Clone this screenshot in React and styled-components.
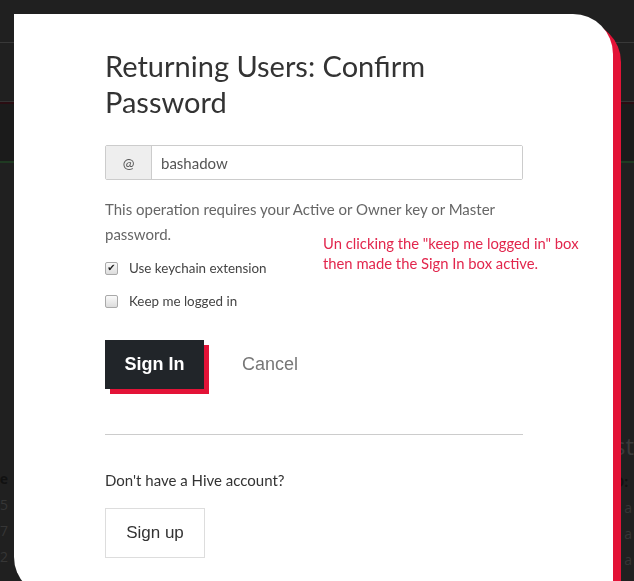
import styled, { createGlobalStyle } from "styled-components";

const GlobalStyle = createGlobalStyle`
  html, body {
    margin: 0;
    padding: 0;
    height: 100%;
    overflow: hidden;
    background: #202020;
    font-family: "Lato", "Liberation Sans", sans-serif;
  }
  * {
    box-sizing: border-box;
  }
`;

const Page = styled.div`
  width: 634px;
  height: 581px;
  background: #202020;
  color: #444;
`;

const TopBar = styled.div`
  height: 43px;
  border-bottom: 1px solid #383838;
`;

const NavBar = styled.div`
  height: 59px;
  border-bottom: 1px solid #333;
`;

const SubBar = styled.div`
  height: 61px;
  background: #1b1b1b;
  border-top: 2px solid #2a0d12;
  border-bottom: 2px solid #1f3a22;
`;

const Columns = styled.div`
  display: flex;
  justify-content: space-between;
  padding-top: 306px;
`;

const SideCol = styled.div`
  display: flex;
  flex-direction: column;
  align-items: ${(p) => (p.$right ? "flex-start" : "flex-end")};
  width: 20px;
  margin-left: ${(p) => (p.$right ? "0" : "-12px")};
  gap: 7px;
  font-family: "Open Sans", sans-serif;
  font-size: 14px;
  line-height: 19px;
  color: #363636;
`;

const SideBig = styled.div`
  font-size: 24px;
  line-height: 30px;
  color: #3a3a3a;
  margin-top: -38px;
  margin-bottom: 4px;
`;

const SideBold = styled.div`
  font-weight: 700;
  color: #111;
`;

const Modal = styled.div`
  position: fixed;
  top: 14px;
  left: 14px;
  width: 599px;
  height: 583px;
  background: #fff;
  border-radius: 0 40px 0 40px;
  box-shadow: 8px 8px 0 #e31337;
  padding: 34px 0 0 91px;
`;

const Content = styled.div`
  width: 418px;
  position: relative;
`;

const Title = styled.h1`
  margin: 0;
  font-weight: 400;
  font-size: 29px;
  line-height: 36px;
  color: #333;
`;

const InputGroup = styled.div`
  display: flex;
  height: 35px;
  margin-top: 25px;
  border: 1px solid #ccc;
  border-radius: 2px;
`;

const Addon = styled.span`
  width: 46px;
  display: flex;
  align-items: center;
  justify-content: center;
  background: #eee;
  border-right: 1px solid #ccc;
  font-size: 14px;
  color: #555;
`;

const Input = styled.input`
  flex: 1;
  border: none;
  outline: none;
  padding: 0 9px;
  font-family: inherit;
  font-size: 15px;
  color: #555;
  background: #fff;
`;

const Help = styled.p`
  margin: 17px 0 0;
  font-size: 15px;
  line-height: 25px;
  color: #666;
`;

const CheckRow = styled.label`
  display: flex;
  align-items: center;
  gap: 11px;
  margin-top: ${(p) => (p.$first ? "12px" : "15px")};
  height: 18px;
  font-size: 13.4px;
  color: #444;
  cursor: pointer;
`;

const Box = styled.span`
  width: 13px;
  height: 13px;
  flex: none;
  display: flex;
  align-items: center;
  justify-content: center;
  border: 1px solid #a9a9a9;
  border-radius: 2px;
  background: linear-gradient(#fafafa, #dcdcdc);
  font-family: "DejaVu Sans", sans-serif;
  font-size: 10px;
  line-height: 1;
  color: #222;
`;

const Note = styled.div`
  position: absolute;
  left: 218px;
  top: 185px;
  width: 266px;
  font-size: 14.8px;
  line-height: 20px;
  color: #e2264d;
`;

const Actions = styled.div`
  display: flex;
  align-items: center;
  gap: 38px;
  margin-top: 30px;
`;

const SignIn = styled.button`
  width: 99px;
  height: 49px;
  border: none;
  background: #212529;
  box-shadow: 5px 5px 0 #e31337;
  color: #fff;
  font-family: "Liberation Sans", Arial, sans-serif;
  font-weight: 700;
  font-size: 18px;
  cursor: pointer;
`;

const Cancel = styled.button`
  border: none;
  background: none;
  padding: 0;
  font-family: "Liberation Sans", Arial, sans-serif;
  font-size: 18px;
  color: #777;
  cursor: pointer;
`;

const Divider = styled.hr`
  margin: 45px 0 0;
  border: none;
  border-top: 1px solid #ccc;
`;

const Question = styled.p`
  margin: 35px 0 0;
  font-size: 15px;
  line-height: 20px;
  color: #333;
`;

const SignUp = styled.button`
  margin-top: 18px;
  width: 100px;
  height: 50px;
  border: 1px solid #ddd;
  background: #fff;
  font-family: "Liberation Sans", Arial, sans-serif;
  font-size: 17px;
  color: #333;
  cursor: pointer;
`;

const Check = ({ checked, children, first }) => (
  <CheckRow $first={first}>
    <Box>{checked ? "✔" : ""}</Box>
    {children}
  </CheckRow>
);

export default function App() {
  return (
    <>
      <GlobalStyle />
      <Page>
        <TopBar />
        <NavBar />
        <SubBar />
        <Columns>
          <SideCol>
            <SideBold>e</SideBold>
            <div>5</div>
            <div>7</div>
            <div>2</div>
          </SideCol>
          <SideCol $right>
            <SideBig>st</SideBig>
            <SideBold>D:</SideBold>
            <div>s a</div>
            <div>s a</div>
            <div>s a</div>
          </SideCol>
        </Columns>
      </Page>
      <Modal>
        <Content>
          <Title>Returning Users: Confirm Password</Title>
          <InputGroup>
            <Addon>@</Addon>
            <Input defaultValue="bashadow" />
          </InputGroup>
          <Help>This operation requires your Active or Owner key or Master password.</Help>
          <Check checked first>
            Use keychain extension
          </Check>
          <Check>Keep me logged in</Check>
          <Note>
            Un clicking the "keep me logged in" box then made the Sign In box active.
          </Note>
          <Actions>
            <SignIn>Sign In</SignIn>
            <Cancel>Cancel</Cancel>
          </Actions>
          <Divider />
          <Question>Don't have a Hive account?</Question>
          <SignUp>Sign up</SignUp>
        </Content>
      </Modal>
    </>
  );
}
